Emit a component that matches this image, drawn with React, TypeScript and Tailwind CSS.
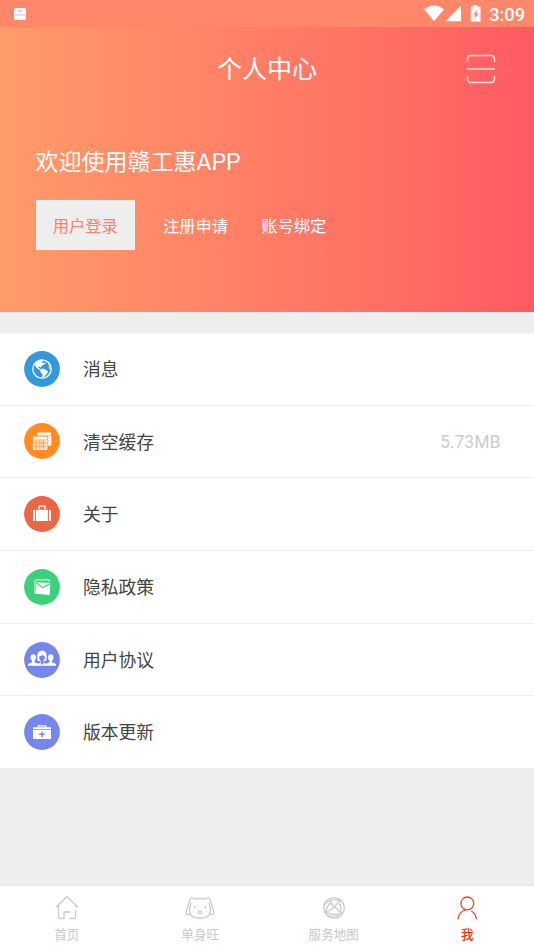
import React from "react";

const Disc = ({ color, children }: { color: string; children: React.ReactNode }) => (
  <svg width="36" height="36" viewBox="0 0 36 36" className="shrink-0">
    <circle cx="18" cy="18" r="17.9" fill={color} />
    {children}
  </svg>
);

const Globe = () => (
  <Disc color="#3498db">
    <circle cx="18" cy="18" r="9.2" fill="none" stroke="#fff" strokeWidth="1.3" />
    <path
      d="M10.6 13.5 14.2 9.8 17.5 9.2 19.4 10.1 17.8 11.3 19.3 12.2 20.6 11.2 21.8 12.5 19.6 13.8 17.6 15 16.8 16.4 14.8 15.5 13.9 16.6 15.4 17 15.9 18.4 18.8 17.4 21.6 18.7 24 20.4 22.5 23.2 19.9 26 18.2 26.5 18.5 23.5 16.5 21 16.3 19.3 13.8 17.9 11.6 15.8Z"
      fill="#fff"
    />
    <path d="M24.6 11.8 26.4 14.6 27 18 25.6 18.4 24.3 16.2 24.8 14.3 23.6 13.1Z" fill="#fff" fillOpacity=".5" />
  </Disc>
);

const Calendars = () => (
  <Disc color="#ff8c23">
    <path d="M13 9.5h14v3H13z" fill="#fff" />
    <path d="M24.3 13.5H27v8.8h-2.7zM24.3 16.4H27M24.3 19.3H27" fill="#ffd9b5" stroke="#fff" strokeWidth=".8" />
    <path d="M9 13.6h14.2v3H9z" fill="#fff" />
    <path d="M9 17.2h14.2v9.4H9z" fill="#ffe5cc" />
    <path d="M9 20h14.2M9 23.2h14.2M12.3 17.2v9.4M15.8 17.2v9.4M19.4 17.2v9.4" stroke="#ff9c42" strokeWidth=".9" />
    <path d="M9.3 17v9.3h13.6V17" fill="none" stroke="#fff" strokeWidth=".7" />
  </Disc>
);

const Suitcase = () => (
  <Disc color="#ea6644">
    <path d="M15 13v-2.8h6V13" fill="none" stroke="#fff" strokeWidth="1.3" />
    <path d="M9 14h2v11H9zM11.9 13.8h12.2V25H11.9zM25 14h2v11h-2z" fill="#fff" />
  </Disc>
);

const Mail = () => (
  <Disc color="#3dd07b">
    <path d="M11 24.5V12l2-1.3h12v2.2" fill="none" stroke="#b6edcb" strokeWidth="1.4" />
    <path d="M12.5 13.2 26.3 14.1 25.8 26 11.4 24.8Z" fill="#fff" />
    <path d="m12.5 13.8 6.2 4.8 7.2-3.7" fill="none" stroke="#3dd07b" strokeWidth="1.1" />
  </Disc>
);

const People = () => (
  <Disc color="#7587ef">
    <g fill="#fff">
      <ellipse cx="9.2" cy="15.5" rx="2.7" ry="3.2" />
      <path d="M8 18h2.5v2.3l3.2 1.2v2.2H4v-1.6l4-1.8z" />
      <ellipse cx="26.8" cy="15.5" rx="2.7" ry="3.2" />
      <path d="M25.5 18H28v2.3l4 1.8v1.6h-9.7v-2.2l3.2-1.2z" />
      <path d="M14 19c-.9-1.2-.6-3-.6-5.2C13.4 10.6 15.1 8.5 18 8.5s4.6 2.1 4.6 5.3c0 2.2.3 4-.6 5.2h-2v2l3.2 1v1.7H12.8V22l3.2-1v-2z" />
    </g>
    <path d="M15.3 14.2c1.7-.3 2.6-.8 3.5-1.8.4 1 .9 1.4 1.9 1.8v2.5L19.4 19v2.3L18 23l-1.4-1.7V19l-1.3-2.3z" fill="#7587ef" />
  </Disc>
);

const MedKit = () => (
  <Disc color="#7587ef">
    <path d="M14.3 14v-2.2h7.4V14" fill="none" stroke="#fff" strokeWidth="1.3" />
    <path d="M9 13.3h18v2H9zM9 15.9h18v9H9z" fill="#fff" />
    <path d="M18 17.5v5.6M15.2 20.3h5.6" stroke="#7587ef" strokeWidth="1.5" />
  </Disc>
);

const HomeIcon = () => (
  <svg width="26" height="26" viewBox="0 0 26 26" fill="none" stroke="#cacaca" strokeWidth="1.3" strokeLinejoin="round" strokeLinecap="round">
    <path d="M2.2 12 13 1.8 23.8 12M4.5 10.7V22q0 1.5 1.5 1.5h4V17h5.7M16 23.5h4q1.5 0 1.5-1.5v-6.5M21.5 10.5v1" />
  </svg>
);

const DogIcon = () => (
  <svg width="30" height="26" viewBox="0 0 30 26" fill="none" stroke="#cacaca" strokeWidth="1.3" strokeLinecap="round">
    <path d="M9.3 4Q15 3 20.7 4M9.3 4C8 2.4 6.6 2.4 5.6 3.4C4.4 5 4.2 8 2.8 11.5 1.4 15 .6 18 1.8 19.2 2.8 20 4.6 19.6 5.2 18.6 4 14.5 4.8 11 6.2 8M20.7 4C22 2.4 23.4 2.4 24.4 3.4C25.6 5 25.8 8 27.2 11.5 28.6 15 29.4 18 28.2 19.2 27.2 20 25.4 19.6 24.8 18.6 26 14.5 25.2 11 23.8 8M5 18.8C7 22 10.5 23 15 23S23 22 25 18.8" />
    <ellipse cx="15" cy="17.3" rx="1.9" ry="1.4" strokeWidth="1.1" />
    <path d="M9.7 12v.3M20.4 12v.3" strokeWidth="1.8" />
  </svg>
);

const MapIcon = () => (
  <svg width="26" height="26" viewBox="0 0 26 26" fill="none" stroke="#cacaca" strokeWidth="1.2">
    <circle cx="13" cy="12.8" r="10.3" />
    <path d="M3.5 10Q7 5 11.5 4.5M11.5 4.5Q7 9 4.5 17M3 16.5q6 3 14.7 2.8L22 17.5M4.5 17q10-3 14.3-13M10.5 9l9 8.5M11.5 4.5q5-.5 9 2M5 19.5q4 2.5 13 1.2M19 9q1.6 5 .5 8.5" />
    <path d="M9.6 8.7h2M17.8 9.2h2M4 16v1" strokeWidth="2" />
  </svg>
);

const UserIcon = () => (
  <svg width="26" height="26" viewBox="0 0 26 26" fill="none" stroke="#e44a25" strokeWidth="1.3" strokeLinecap="round">
    <circle cx="13.3" cy="8.4" r="6.4" />
    <path d="M4 23.8Q5.2 16.4 11.5 14.8M17.7 16.2Q21.8 18.8 22.4 23.8" />
  </svg>
);

const rows = [
  { label: "消息", icon: <Globe /> },
  { label: "清空缓存", icon: <Calendars />, value: "5.73MB" },
  { label: "关于", icon: <Suitcase /> },
  { label: "隐私政策", icon: <Mail /> },
  { label: "用户协议", icon: <People /> },
  { label: "版本更新", icon: <MedKit /> },
];

const tabs = [
  { label: "首页", icon: <HomeIcon /> },
  { label: "单身旺", icon: <DogIcon /> },
  { label: "服务地图", icon: <MapIcon /> },
  { label: "我", icon: <UserIcon />, active: true },
];

const StatusBar = () => (
  <div className="flex h-[27px] shrink-0 items-center justify-between bg-[#ff8769] pl-[14px] pr-[9px] text-white">
    <svg width="12" height="12" viewBox="0 0 12 12">
      <rect width="12" height="12" rx="2" fill="#fff" />
      <path d="M3.7 2Q6 5.5 8.3 2" fill="none" stroke="#ff9c85" strokeWidth="1" />
      <path d="M1 7h10" fill="none" stroke="#ffc8ba" strokeWidth="1.4" />
    </svg>
    <div className="flex items-center">
      <svg width="58" height="18" viewBox="0 0 58 18" fill="#fff">
        <path d="M0 4.3Q10-3.3 20 4.3L10 16.2Z" />
        <path d="M21.5 16.2H37V.7Z" />
        <path d="M46.8 1.6h2.6V0h4.2v1.6h2.9v15h-9.7z" />
        <path d="m53.3 4.4-4 5.3h2l-.8 4.2 4-5.4h-2z" fill="#ff8769" />
      </svg>
      <span className="ml-[7px] pt-px text-[18.2px] font-medium leading-[27px]">3:09</span>
    </div>
  </div>
);

export default function App() {
  return (
    <div className="flex h-[950px] w-[534px] flex-col overflow-hidden bg-[#eeeeee] font-['Roboto','Noto_Sans_CJK_SC',sans-serif]">
      <StatusBar />
      <header className="h-[285px] shrink-0 bg-linear-to-r from-[#ff9b69] to-[#ff5a62] text-white">
        <div className="grid h-[83px] grid-cols-[1fr_auto_1fr] items-center">
          <span />
          <h1 className="pt-[2px] text-[25px] leading-[36px]">个人中心</h1>
          <svg width="30" height="30" viewBox="0 0 30 30" fill="none" stroke="#fff" strokeOpacity=".8" strokeWidth="1.5" className="mr-[38px] justify-self-end">
            <path d="M1.5 8V5q0-3.5 3.5-3.5h20q3.5 0 3.5 3.5v3M1 15h28M1.5 22v3q0 3.5 3.5 3.5h20q3.5 0 3.5-3.5v-3" />
          </svg>
        </div>
        <div className="pl-[35.5px] pt-[35px]">
          <p className="text-[23px] leading-[36px]">欢迎使用赣工惠APP</p>
          <div className="mt-[19px] flex h-[50px] items-center text-[16.3px]">
            <button className="h-full w-[99.5px] bg-[#eeeeee] pt-[4px] text-[#fb8069]">用户登录</button>
            <button className="ml-[28px] pt-[4px]">注册申请</button>
            <button className="ml-[33px] pt-[4px]">账号绑定</button>
          </div>
        </div>
      </header>
      <main className="mt-[21px] flex flex-1 flex-col gap-[1.2px]">
        {rows.map((r) => (
          <div key={r.label} className="flex h-[71.5px] shrink-0 items-center bg-white pl-[23.5px] pr-[33.5px]">
            {r.icon}
            <span className="ml-[23.5px] pt-[3px] text-[17.8px] text-[#444444]">{r.label}</span>
            {r.value && <span className="ml-auto pt-[2px] text-[17.6px] text-[#cccccc]">{r.value}</span>}
          </div>
        ))}
      </main>
      <nav className="grid h-[65px] shrink-0 grid-cols-4 border-t border-[#e4e4e4] bg-white">
        {tabs.map((t) => (
          <div key={t.label} className="flex flex-col items-center pt-[9px]">
            {t.icon}
            <span className={t.active ? "mt-[5px] text-[12.6px] font-medium leading-[18px] text-[#e03a12]" : "mt-[5px] text-[12.6px] leading-[18px] text-[#c8c8c8]"}>
              {t.label}
            </span>
          </div>
        ))}
      </nav>
    </div>
  );
}
